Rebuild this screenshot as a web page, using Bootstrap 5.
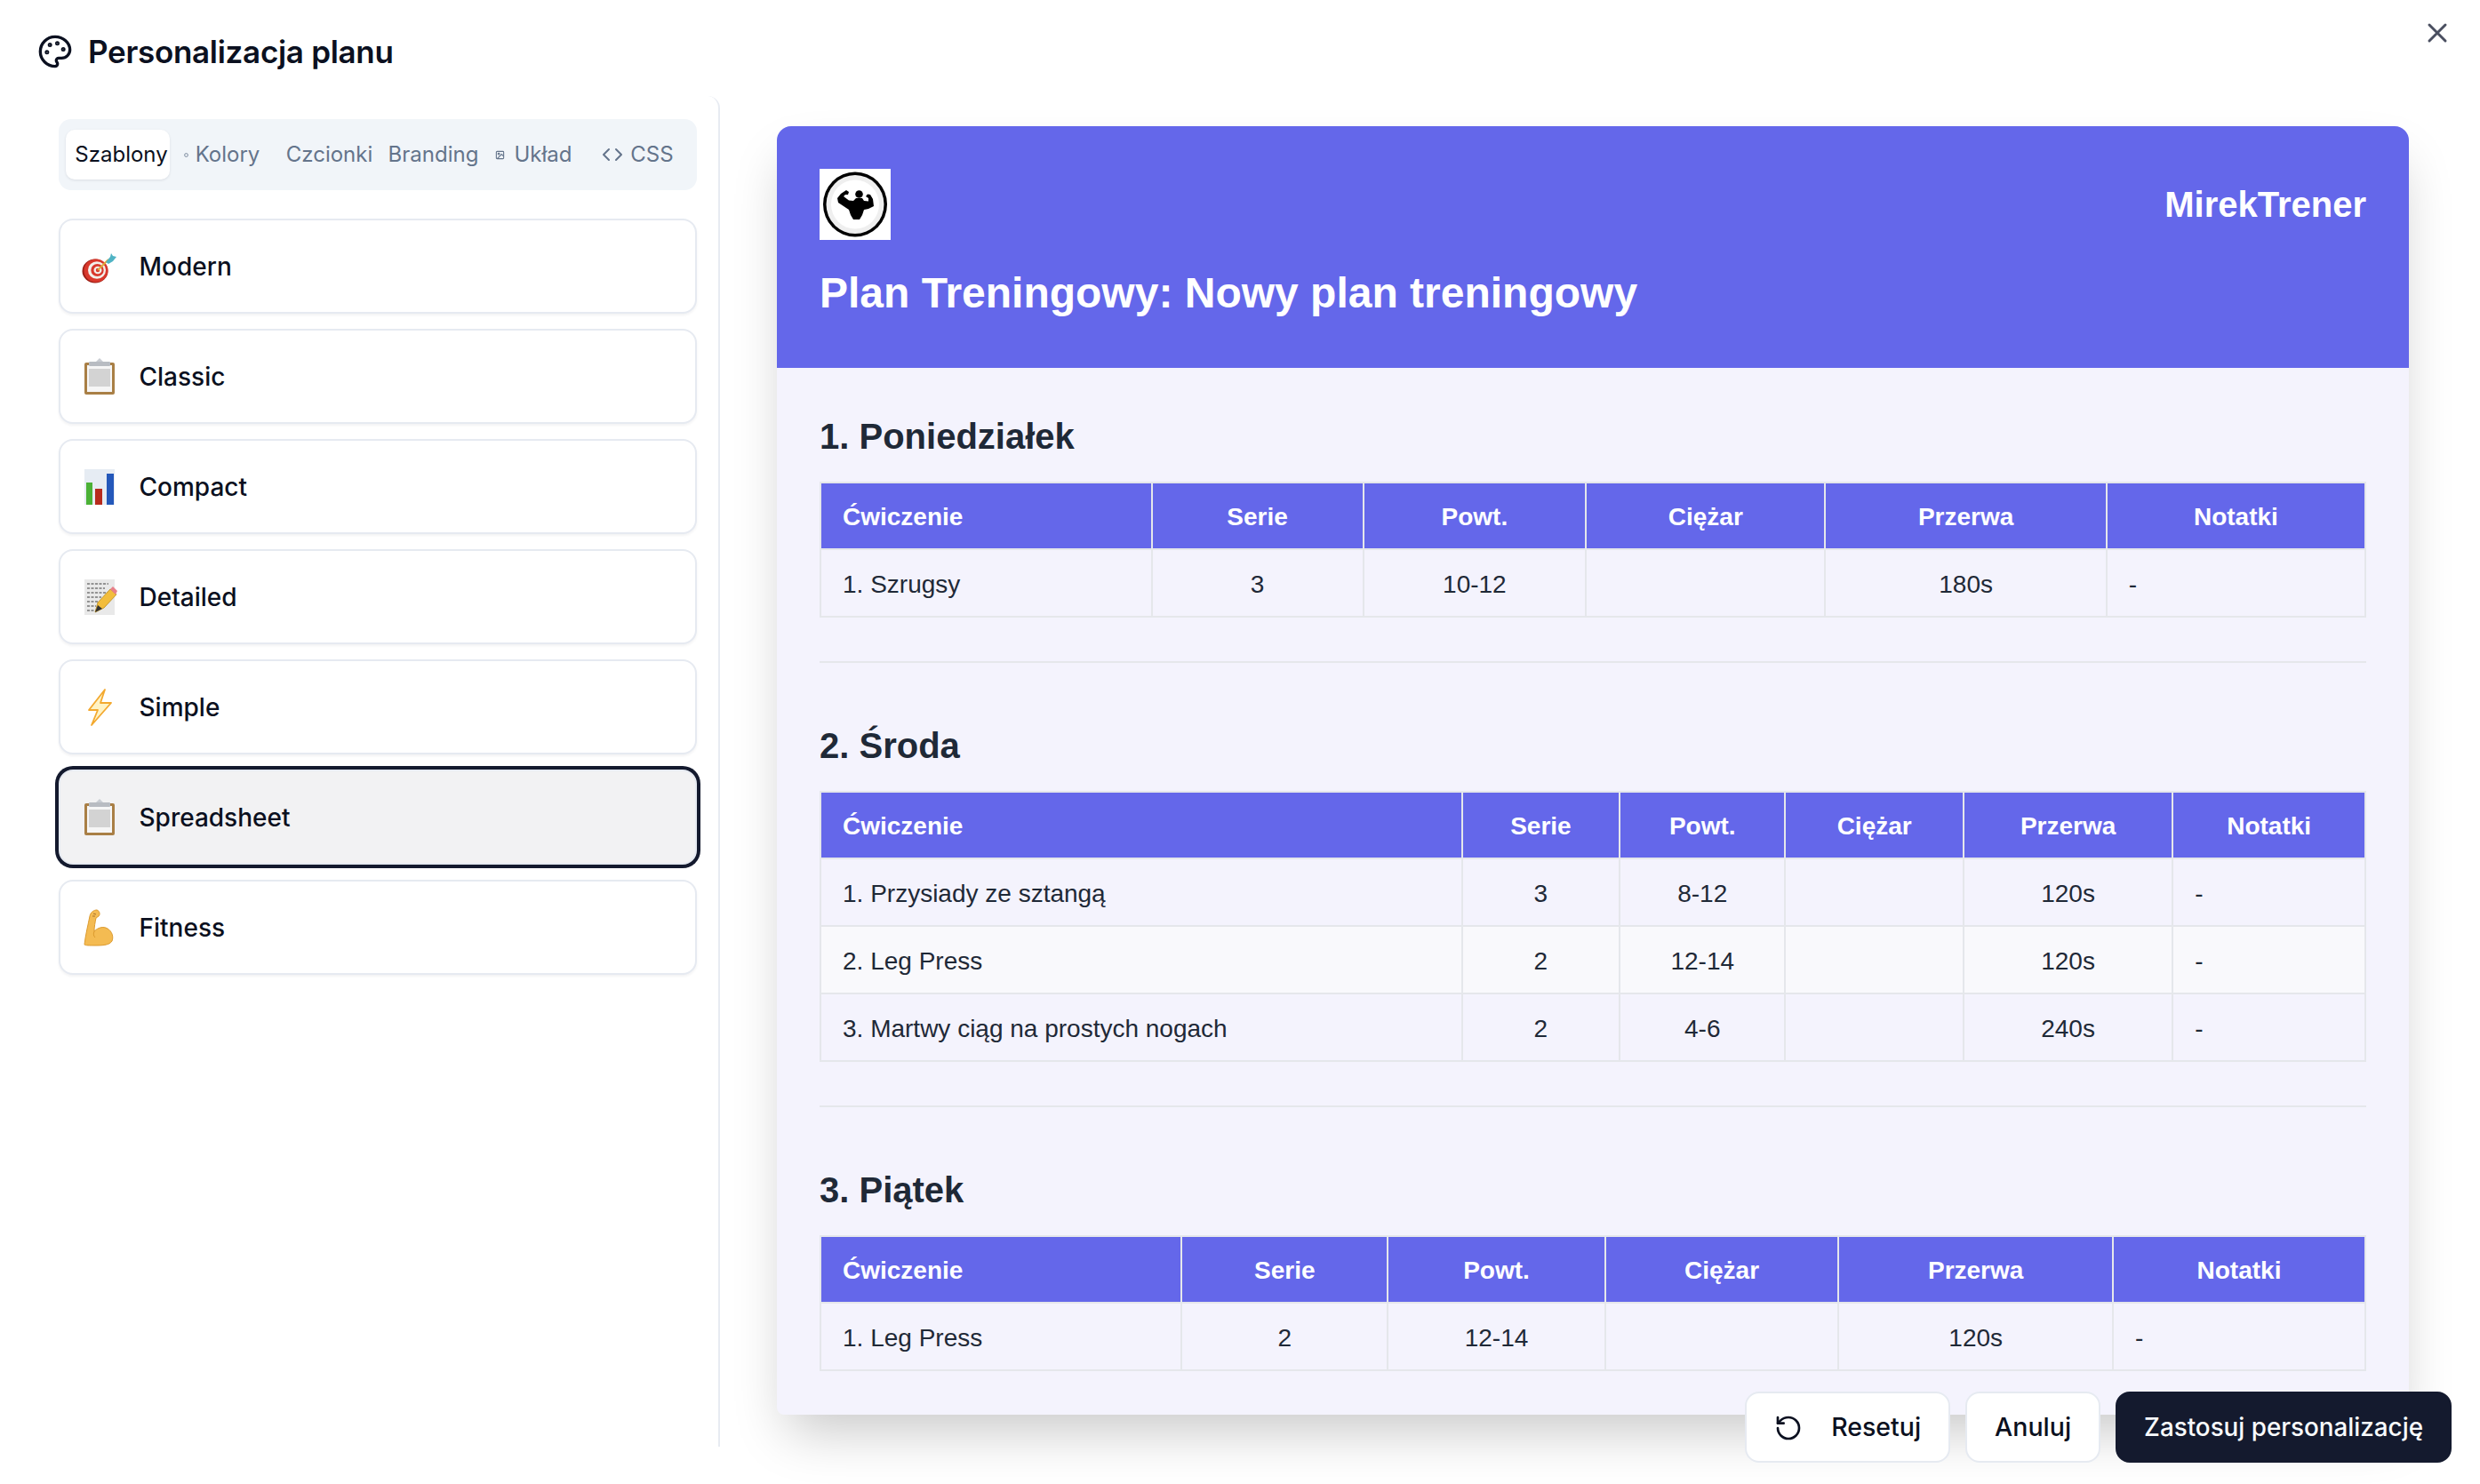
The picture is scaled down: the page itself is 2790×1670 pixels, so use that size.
<!DOCTYPE html>
<html lang="pl"><head><meta charset="utf-8"><title>Personalizacja planu</title>
<link href="https://cdn.jsdelivr.net/npm/bootstrap@5.3.0/dist/css/bootstrap.min.css" rel="stylesheet">
<style>
html,body{height:1670px;overflow:hidden;background:#fff}
body{font-family:Inter,"Liberation Sans",sans-serif;color:#0f172a;position:relative}
.pz-head{height:108px;padding:0 0 0 42px;gap:17px}
.pz-head svg{width:40px;height:40px;margin-top:8px}
.pz-title{font-size:35px;font-weight:600;margin:8px 0 0;letter-spacing:-.3px;color:#0b1020}
.pz-close{position:absolute;top:19px;right:30px;width:36px;height:36px;color:#4a4f60;background:none;border:0;padding:0}
.pz-close svg{width:36px;height:36px}
.pz-left{width:810px;height:1520px;flex:none;border-right:2px solid #e7ebf2;border-top-right-radius:14px;padding:26px 24px 0 66px}
.pz-tabs{display:grid;grid-template-columns:repeat(6,1fr);background:#f1f5f9;border-radius:14px;height:80px;padding:12px 8px;margin-bottom:32px;flex-wrap:nowrap}
.pz-tab{font-size:24px;color:#64748b;display:flex;align-items:center;justify-content:center;white-space:nowrap;padding:0;border-radius:10px;gap:8px;background:none;border:0;text-decoration:none}
.pz-tab.on{background:#fff;color:#0b1020;box-shadow:0 1px 3px rgba(15,23,42,.1)}
.pz-shift{padding-left:8px}
.pz-tab svg{flex:none}
.pz-i1{width:5px;height:5px}
.pz-i2{width:11px;height:11px;margin-right:2px}
.pz-i3{width:24px;height:24px}
.pz-item{height:107px;margin-bottom:17px;width:100%;border:2.5px solid #e6eaf1;border-radius:16px;background:#fff;box-shadow:0 2px 3px rgba(15,23,42,.05);font-size:28px;font-weight:500;color:#0b1020;padding:1px 0 0 23.5px;gap:25px;text-align:left}
.pz-item:hover{background:#fff;color:#0b1020;border-color:#e6eaf1}
.pz-item.on,.pz-item.on:hover{background:#f2f2f3;box-shadow:0 0 0 4px #141a2e}
.pz-emoji{width:40px;height:42px;flex:none}
.pz-right{flex:1;padding:34px 80px 0 64px}
.pz-card{background:#f4f3fd;border-radius:16px 16px 8px 8px;box-shadow:0 30px 60px -12px rgba(0,0,0,.22);height:1450px;overflow:hidden}
.pz-hero{background:#6467ea;color:#fff;height:272px;padding:48px 48px 0;font-family:"Liberation Sans",Arial,sans-serif}
.pz-logo{width:80px;height:80px;display:block}
.pz-brand{font-size:40px;font-weight:700}
.pz-plan{font-size:48px;font-weight:700;margin:30px 0 0;line-height:60px}
.pz-body{padding:53px 48px 0;font-family:"Liberation Sans",Arial,sans-serif;color:#1f2937}
.pz-day{font-size:40px;font-weight:700;line-height:48px;margin:0 0 27px;color:#1f2937}
.pz-rule{height:2px;background:#e5e7eb;border:0;opacity:1;margin:49px 0 69px}
.pz-tbl{margin:0;width:100%;border-collapse:collapse;font-size:28px;color:#1f2937;--bs-table-bg:transparent;--bs-table-color:#1f2937}
.pz-tbl th,.pz-tbl td{height:76px;padding:3px 24px 0;border:2px solid #e5e7eb;text-align:center;vertical-align:middle;white-space:nowrap}
.pz-tbl th{background:#6467ea;color:#fff;font-weight:700;height:75px;padding-top:2px}
.pz-tbl th:first-child,.pz-tbl td:first-child,.pz-tbl td:last-child{text-align:left}
.pz-tbl tbody tr:nth-child(even) td{background:#f9f9fc}
.pz-foot{position:absolute;right:32px;bottom:24px;gap:17px}
.pz-btn{height:80px;font-size:28.5px;font-weight:500;border-radius:16px;background:#fff;border:2.5px solid #e6eaf1;color:#0b1020;padding:1px 31px 0;gap:32px}
.pz-btn:hover{background:#fff;color:#0b1020;border-color:#e6eaf1}
.pz-btn svg{width:32px;height:32px}
.pz-btn.dark,.pz-btn.dark:hover{background:#141a2e;border-color:#141a2e;color:#f8fafc;font-size:27.8px;padding:1px 30px 0}
</style></head><body>
<header class="pz-head d-flex align-items-center">
<svg viewBox="0 0 24 24" fill="none" stroke="#0b1020" stroke-width="2" stroke-linecap="round" stroke-linejoin="round"><circle cx="13.5" cy="6.5" r=".5" fill="#0b1020"/><circle cx="17.5" cy="10.5" r=".5" fill="#0b1020"/><circle cx="8.5" cy="7.5" r=".5" fill="#0b1020"/><circle cx="6.5" cy="12.5" r=".5" fill="#0b1020"/><path d="M12 2C6.5 2 2 6.5 2 12s4.5 10 10 10c.926 0 1.648-.746 1.648-1.688 0-.437-.18-.835-.437-1.125-.29-.289-.438-.652-.438-1.125a1.64 1.64 0 0 1 1.668-1.668h1.996c3.051 0 5.555-2.503 5.555-5.554C21.965 6.012 17.461 2 12 2z"/></svg>
<h1 class="pz-title">Personalizacja planu</h1>
</header>
<button class="pz-close" aria-label="Zamknij"><svg viewBox="0 0 24 24" fill="none" stroke="currentColor" stroke-width="2" stroke-linecap="round"><path d="M18 6 6 18M6 6l12 12"/></svg></button>
<div class="d-flex">
<aside class="pz-left">
<nav class="nav pz-tabs">
<a class="pz-tab pz-shift on">Szablony</a>
<a class="pz-tab"><svg class="pz-i1" viewBox="0 0 24 24" fill="none" stroke="#64748b" stroke-width="4"><circle cx="12" cy="12" r="9"/></svg>Kolory</a>
<a class="pz-tab pz-shift">Czcionki</a>
<a class="pz-tab pz-shift">Branding</a>
<a class="pz-tab"><svg class="pz-i2" viewBox="0 0 24 24" fill="none" stroke="#64748b" stroke-width="2.4"><rect x="3" y="3" width="18" height="18" rx="2"/><circle cx="9" cy="9" r="2"/><path d="m21 15-5-5L5 21"/></svg>Układ</a>
<a class="pz-tab"><svg class="pz-i3" viewBox="0 0 24 24" fill="none" stroke="#64748b" stroke-width="2" stroke-linecap="round" stroke-linejoin="round"><path d="m16 18 6-6-6-6M8 6l-6 6 6 6"/></svg>CSS</a>
</nav>
<div class="d-flex flex-column">
<button class="btn pz-item d-flex align-items-center"><svg class="pz-emoji" viewBox="0 0 40 42"><ellipse cx="15" cy="26" rx="14.500" ry="13.500" fill="#9d2118"/><ellipse cx="16" cy="25.500" rx="13.500" ry="13" fill="#d9382c"/><ellipse cx="17" cy="25" rx="10" ry="9.800" fill="#f3efe9"/><ellipse cx="17.500" cy="25" rx="7.200" ry="7" fill="#d9382c"/><ellipse cx="18" cy="25" rx="4.500" ry="4.300" fill="#f3efe9"/><ellipse cx="18" cy="25" rx="2.200" ry="2.200" fill="#d9382c"/><path d="M18 25 30 13" stroke="#e0a93b" stroke-width="2"/><path d="M27 16l5-6 1-4 2 3 4 1-4 5-5 3z" fill="#4fb3c4"/></svg><span>Modern</span></button>
<button class="btn pz-item d-flex align-items-center"><svg class="pz-emoji" viewBox="0 0 40 42"><rect x="3" y="5" width="34" height="36" rx="2" fill="#a97f45"/><rect x="6" y="8" width="28" height="30" fill="#f6f6f6"/><rect x="8" y="12" width="24" height="20" fill="#d3d3d3"/><rect x="8" y="4" width="24" height="5" rx="1" fill="#b8bcc2"/><path d="M16 4l4-4 4 4z" fill="#c9cdd3"/></svg><span>Classic</span></button>
<button class="btn pz-item d-flex align-items-center"><svg class="pz-emoji" viewBox="0 0 40 42"><rect x="3" y="1" width="34" height="40" fill="#e6ecf3"/><rect x="5" y="16" width="7" height="25" fill="#4bb136"/><rect x="15" y="23" width="8" height="18" fill="#b72b1d"/><rect x="28" y="6" width="8" height="35" fill="#2458ba"/></svg><span>Compact</span></button>
<button class="btn pz-item d-flex align-items-center"><svg class="pz-emoji" viewBox="0 0 40 42"><rect x="3" y="1" width="34" height="40" fill="#e9e9e9"/><path d="M6 6h24M6 11h20M6 16h24M6 21h16M6 26h12M6 31h10M6 36h10" stroke="#777" stroke-width="1.300" stroke-dasharray="3 1.500"/><path d="M15 38l3-11 14-15 7 6-14 15z" fill="#f2bd3c" stroke="#b98a1c" stroke-width=".8"/><path d="M32 12l3-3 5 5-2 4z" fill="#e8808a"/><path d="M15 38l3-8 5 4z" fill="#333"/></svg><span>Detailed</span></button>
<button class="btn pz-item d-flex align-items-center"><svg class="pz-emoji" viewBox="0 0 40 42"><path d="M26 1 8 24h10L11 41l22-25H21z" fill="#fff3c4" stroke="#f3a92f" stroke-width="1.800" stroke-linejoin="round"/></svg><span>Simple</span></button>
<button class="btn pz-item on d-flex align-items-center"><svg class="pz-emoji" viewBox="0 0 40 42"><rect x="3" y="5" width="34" height="36" rx="2" fill="#a97f45"/><rect x="6" y="8" width="28" height="30" fill="#f6f6f6"/><rect x="8" y="12" width="24" height="20" fill="#d3d3d3"/><rect x="8" y="4" width="24" height="5" rx="1" fill="#b8bcc2"/><path d="M16 4l4-4 4 4z" fill="#c9cdd3"/></svg><span>Spreadsheet</span></button>
<button class="btn pz-item d-flex align-items-center"><svg class="pz-emoji" viewBox="0 0 40 42"><path d="M9 8C10 3 14 1 17 1c3 1 4 5 2 7l-3 2c-1 5-2 10-2 15 4-4 10-6 15-3 5 3 7 9 5 14-3 5-12 5-20 5-5 0-10 0-11-1 1-10 4-22 6-32z" fill="#f4bb52" stroke="#dc9a2e" stroke-width="1"/><path d="M14 25c-1 3-1 5 1 7" fill="none" stroke="#dc9a2e" stroke-width="1"/><path d="M13 5l3 1M12 8l3 0" stroke="#a9702a" stroke-width="1"/></svg><span>Fitness</span></button>
</div>
</aside>
<main class="pz-right">
<div class="pz-card">
<div class="pz-hero">
<div class="d-flex justify-content-between align-items-center">
<svg class="pz-logo" viewBox="0 0 80 80"><rect width="80" height="80" fill="#fff"/><ellipse cx="40" cy="40" rx="36" ry="36.500" fill="#000"/><ellipse cx="40" cy="40" rx="32.500" ry="33" fill="#efefef"/><ellipse cx="40" cy="40" rx="27" ry="27.500" fill="#fff"/><circle cx="44.500" cy="28.500" r="4.300"/><path d="M30 24L33 26 32 29H29L27 31 33 35.500 38 36 41 33H48L50 36 55 36.500 55 33 52 31 54 28.500 57 29 60 34 61 42 55 45 50 46 48 52 45 57H38L35 52 33 46 27 42 21 38 20 33 24 28Z"/></svg>
<div class="pz-brand">MirekTrener</div>
</div>
<h2 class="pz-plan">Plan Treningowy: Nowy plan treningowy</h2>
</div>
<div class="pz-body">
<h3 class="pz-day">1. Poniedziałek</h3>
<table class="table pz-tbl"><thead><tr><th>Ćwiczenie</th><th>Serie</th><th>Powt.</th><th>Ciężar</th><th>Przerwa</th><th>Notatki</th></tr></thead>
<tbody><tr><td>1. Szrugsy</td><td>3</td><td>10-12</td><td></td><td>180s</td><td>-</td></tr></tbody></table>
<hr class="pz-rule">
<h3 class="pz-day">2. Środa</h3>
<table class="table pz-tbl"><thead><tr><th>Ćwiczenie</th><th>Serie</th><th>Powt.</th><th>Ciężar</th><th>Przerwa</th><th>Notatki</th></tr></thead>
<tbody><tr><td>1. Przysiady ze sztangą</td><td>3</td><td>8-12</td><td></td><td>120s</td><td>-</td></tr>
<tr><td>2. Leg Press</td><td>2</td><td>12-14</td><td></td><td>120s</td><td>-</td></tr>
<tr><td>3. Martwy ciąg na prostych nogach</td><td>2</td><td>4-6</td><td></td><td>240s</td><td>-</td></tr></tbody></table>
<hr class="pz-rule">
<h3 class="pz-day">3. Piątek</h3>
<table class="table pz-tbl"><thead><tr><th>Ćwiczenie</th><th>Serie</th><th>Powt.</th><th>Ciężar</th><th>Przerwa</th><th>Notatki</th></tr></thead>
<tbody><tr><td>1. Leg Press</td><td>2</td><td>12-14</td><td></td><td>120s</td><td>-</td></tr></tbody></table>
</div>
</div>
</main>
</div>
<footer class="pz-foot d-flex">
<button class="btn pz-btn d-flex align-items-center"><svg viewBox="0 0 24 24" fill="none" stroke="currentColor" stroke-width="2" stroke-linecap="round" stroke-linejoin="round"><path d="M3 12a9 9 0 1 0 9-9 9.750 9.750 0 0 0-6.740 2.740L3 8"/><path d="M3 3v5h5"/></svg><span>Resetuj</span></button>
<button class="btn pz-btn d-flex align-items-center">Anuluj</button>
<button class="btn pz-btn dark d-flex align-items-center">Zastosuj personalizację</button>
</footer>
<script src="https://cdn.jsdelivr.net/npm/bootstrap@5.3.0/dist/js/bootstrap.bundle.min.js"></script>
</body></html>
